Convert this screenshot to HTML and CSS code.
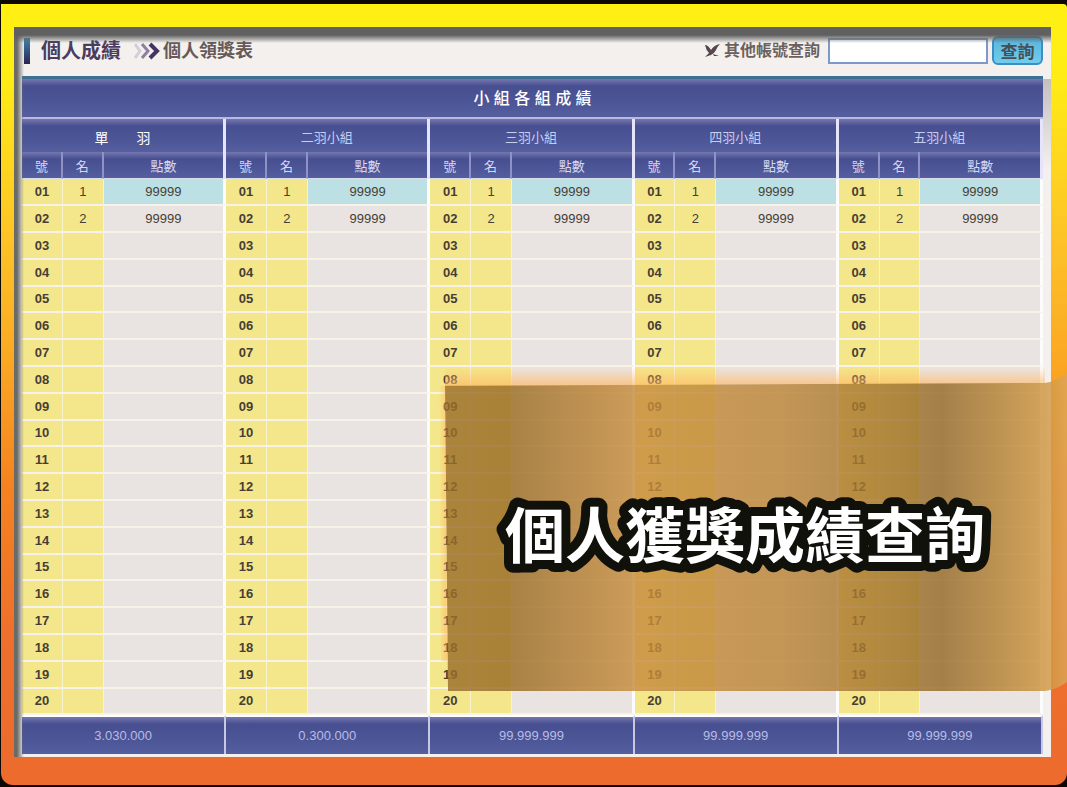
FILE: index.html
```html
<!DOCTYPE html>
<html lang="zh-Hant">
<head>
<meta charset="utf-8">
<title>個人成績</title>
<link rel="stylesheet" href="styles.css">
</head>
<body>
<div class="frame">
  <main class="panel">
    <header class="topbar">
      <span class="marker"></span>
      <h1 class="section">個人成績</h1>
      <svg class="chevrons" viewBox="0 0 26 18" aria-hidden="true">
        <path d="M1 2l5 7-5 7" stroke="#d3ced9"/>
        <path d="M8 2l6 7-6 7" stroke="#8a80a0"/>
        <path d="M16 2l7 7-7 7" stroke="#453462" stroke-width="4"/>
      </svg>
      <h2 class="page">個人領獎表</h2>
      <form class="search">
        <svg class="mark" viewBox="0 0 16 14" aria-hidden="true">
          <path d="M0 1Q3 1 6 6Q9 1 15 0Q12 3 11 6Q9 10 6 11L0 13L4 9Q1 6 0 1z"/>
          <path d="M8 10L14 12L9 12z"/>
        </svg>
        <label for="account">其他帳號查詢</label>
        <input id="account" type="text">
        <button type="submit">查詢</button>
      </form>
    </header>
    <table class="scores">
      <colgroup id="cols"></colgroup>
      <thead>
        <tr class="title"><th colspan="15">小 組 各 組 成 績</th></tr>
        <tr class="groups" id="groups"></tr>
        <tr class="fields" id="fields"></tr>
      </thead>
      <tbody id="rows"></tbody>
      <tfoot><tr id="totals"></tr></tfoot>
    </table>
  </main>
  <aside class="banner">
    <svg class="ribbon" viewBox="0 0 627 330" preserveAspectRatio="none" aria-hidden="true">
      <defs>
        <linearGradient id="gold">
          <stop offset="0" stop-color="#9b6e2a"/>
          <stop offset=".1" stop-color="#996b24"/>
          <stop offset=".31" stop-color="#c68c3c"/>
          <stop offset=".54" stop-color="#bb8538"/>
          <stop offset=".8" stop-color="#956a28"/>
          <stop offset=".96" stop-color="#cc933c"/>
          <stop offset="1" stop-color="#dca75a"/>
        </linearGradient>
        <linearGradient id="glow" x1="0" y1="0" x2="0" y2="1">
          <stop offset="0" stop-color="#ffb864" stop-opacity="0"/>
          <stop offset="1" stop-color="#ffb864" stop-opacity=".7"/>
        </linearGradient>
        <linearGradient id="edge">
          <stop offset="0" stop-color="#ffb864" stop-opacity="0"/>
          <stop offset="1" stop-color="#ffb864" stop-opacity=".6"/>
        </linearGradient>
      </defs>
      <path d="M7 4H605V20L7 23z" fill="url(#glow)"/>
      <path d="M1 23H7L9 300H3z" fill="url(#edge)"/>
      <path d="M7 23L605 20Q618 18 627 10V321Q616 329 605 330L10 331z" fill="url(#gold)" fill-opacity=".82"/>
    </svg>
    <svg class="slogan" viewBox="0 0 500 100">
      <text x="242" y="76" text-anchor="middle">個人獲獎成績查詢</text>
    </svg>
  </aside>
</div>
<script src="script.js"></script>
</body>
</html>
```
FILE: styles.css
```css
* { box-sizing: border-box; }

body {
  margin: 0;
  padding: 4px 0 2px 1px;
  background: #0c0804;
  font-family: "Liberation Sans", "Noto Sans CJK TC", sans-serif;
}

.frame {
  position: relative;
  padding: 23px 16px 28px 13px;
  border-radius: 0 4px 12px 12px;
  background: linear-gradient(#fff012 0%, #ffee14 8%, #fdc327 30%, #fbab24 44%, #f58220 62%, #ee6f2d 82%, #ec6b2d 100%);
}

.panel {
  position: relative;
  padding: 0 8px 3px;
  background: #f3f0ee;
}

.panel::after {
  content: "";
  position: absolute;
  inset: 0;
  pointer-events: none;
  background:
    linear-gradient(#5f605f 8px, rgba(95, 96, 95, 0) 16px) no-repeat,
    linear-gradient(90deg, #6a6b66 3px, rgba(106, 107, 102, 0) 10px) no-repeat,
    linear-gradient(#c4bfbf, rgba(196, 191, 191, 0)) right 52px / 8px 90px no-repeat;
}

.topbar {
  display: flex;
  align-items: center;
  height: 52px;
  padding: 0 0 2px 2px;
  border-bottom: 3px solid #3f6f93;
}

.marker {
  width: 6px;
  height: 26px;
  background: linear-gradient(#3c86ad, #2b2450);
}

.section, .page {
  margin: 0;
  font-size: 18px;
  line-height: 28px;
  white-space: nowrap;
}

.section {
  margin-left: 11px;
  font-size: 20px;
  color: #4b3b5f;
}

.page {
  color: #655a59;
}

.chevrons {
  width: 26px;
  height: 18px;
  margin: 0 3px 0 13px;
  fill: none;
  stroke-width: 3;
}

.search {
  display: flex;
  align-items: center;
  margin-left: auto;
}

.mark {
  width: 16px;
  height: 14px;
  margin-right: 3px;
  fill: #55474b;
}

.search label {
  font-size: 16px;
  font-weight: 700;
  line-height: 24px;
  color: #6b605e;
  white-space: nowrap;
}

.search input {
  width: 160px;
  height: 26px;
  margin: 0 4px 0 8px;
  padding: 0 6px;
  border: 2px solid #7c99c9;
  background: #fff;
  font: inherit;
}

.search button {
  width: 51px;
  height: 29px;
  padding: 0;
  border: 2px solid #3c8ec4;
  border-radius: 6px;
  background: linear-gradient(#58b4dc, #71cdee);
  font: 700 17px/20px "Noto Sans CJK TC", sans-serif;
  color: #464f52;
}

.scores {
  width: 100%;
  table-layout: fixed;
  border-spacing: 0;
  color: #463e36;
}

.scores col.no { width: 4%; }
.scores col.name { width: 4%; }
.scores col.points { width: 12%; }

.scores th, .scores td {
  padding: 0;
  text-align: center;
  font-weight: 400;
}

.scores thead th, .scores tfoot td {
  background: linear-gradient(#7577b0, #474f90 7px, #4c5595 60%, #555e9e);
  color: #c9cdf0;
}

.scores .title th {
  height: 40px;
  padding-bottom: 3px;
  border-bottom: 2px solid #b9b9dd;
  font-size: 16px;
  font-weight: 500;
  color: #fff;
}

.scores .groups th {
  height: 33px;
  padding-top: 2px;
  font-size: 13px;
}

.scores .groups th:first-child {
  font-size: 14px;
  color: #fff;
}

.scores .fields th {
  height: 27px;
  border-right: 2px solid #8f92c4;
  border-bottom: 1px solid #d5ddeb;
  font-size: 13px;
  color: #d5d7f4;
}

.scores .groups th, .scores .fields th.last { border-right: 3px solid #e6e4fa; }

.scores tbody td {
  height: 27px;
  padding-bottom: 1px;
  border-right: 1px solid #f8f3cf;
  border-bottom: 2px solid #f7f3e8;
  background: #f4e68a;
  font-size: 13px;
}

.scores tbody tr:nth-child(5n) td { height: 26px; }

.scores tbody td.no { font-weight: 700; }

.scores tbody td.points {
  border-right: 3px solid #fdfcfc;
  background: #e9e4e1;
}

.scores tbody tr:first-child td.points { background: #bce0e4; }

.scores tfoot td {
  height: 39px;
  border-top: 2px solid #fff;
  border-right: 2px solid #c9c8e4;
  font-size: 13px;
  color: #b7bce6;
}

.banner {
  position: absolute;
  top: 46%;
  right: 0;
  display: grid;
  width: 59%;
  height: 42%;
}

.ribbon {
  grid-area: 1 / 1;
  width: 100%;
  height: 100%;
}

.slogan {
  grid-area: 1 / 1;
  place-self: center;
  width: 500px;
  margin-top: 10px;
  overflow: visible;
  font: 700 60px "Noto Sans CJK TC", sans-serif;
  fill: #fff;
  stroke: #11110c;
  stroke-width: 18px;
  stroke-linejoin: round;
  paint-order: stroke fill;
}
```
FILE: script.js
```js
const groups = [
  { name: "單　　羽", total: "3.030.000" },
  { name: "二羽小組", total: "0.300.000" },
  { name: "三羽小組", total: "99.999.999" },
  { name: "四羽小組", total: "99.999.999" },
  { name: "五羽小組", total: "99.999.999" }
];
const entries = [["1", "99999"], ["2", "99999"]];

const fill = (id, html) => { document.getElementById(id).innerHTML = html; };
const perGroup = (fn) => groups.map(fn).join("");

fill("cols", perGroup(() => '<col class="no"><col class="name"><col class="points">'));
fill("groups", perGroup((g) => `<th colspan="3">${g.name}</th>`));
fill("fields", perGroup(() => '<th>號</th><th>名</th><th class="last">點數</th>'));
fill("totals", perGroup((g) => `<td colspan="3">${g.total}</td>`));

let rows = "";
for (let i = 0; i < 20; i++) {
  const [name, points] = entries[i] || ["", ""];
  const no = String(i + 1).padStart(2, "0");
  rows += "<tr>" + perGroup(() =>
    `<td class="no">${no}</td><td>${name}</td><td class="points">${points}</td>`) + "</tr>";
}
fill("rows", rows);
```
